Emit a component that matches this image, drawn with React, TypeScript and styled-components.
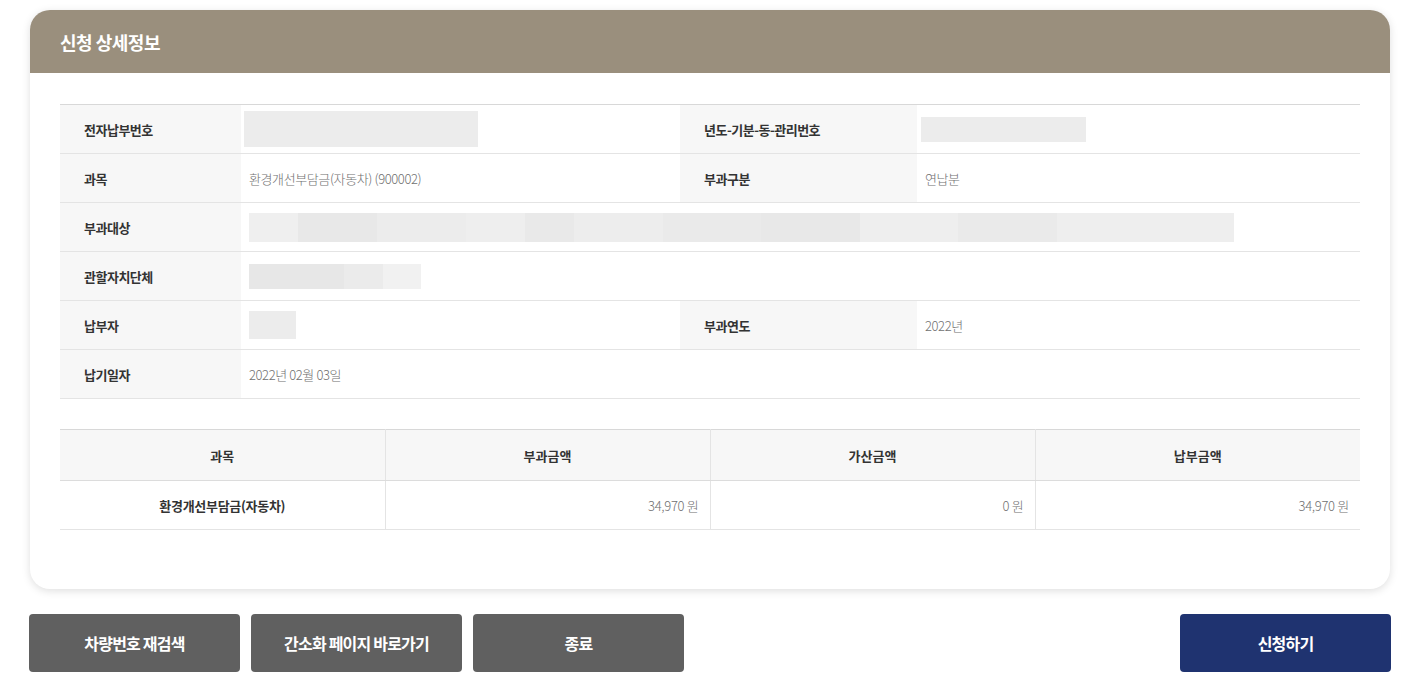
import styled, { createGlobalStyle } from "styled-components";

const GlobalStyle = createGlobalStyle`
  html, body {
    margin: 0;
    padding: 0;
    background: #ffffff;
  }
  body {
    font-family: "Noto Sans CJK KR", "Noto Sans", sans-serif;
    color: #333;
  }
`;

const Page = styled.div`
  width: 1410px;
  padding: 10px 20px 0 30px;
  box-sizing: border-box;
`;

const Card = styled.section`
  width: 1360px;
  background: #fff;
  border-radius: 20px;
  box-shadow: 0 2px 8px rgba(0, 0, 0, 0.13);
  overflow: hidden;
`;

const CardHeader = styled.h2`
  margin: 0;
  height: 63px;
  display: flex;
  align-items: center;
  padding: 0 30px;
  background: #9a8f7d;
  color: #fff;
  font-size: 18px;
  font-weight: 700;
  letter-spacing: -0.5px;
`;

const CardBody = styled.div`
  padding: 31px 30px 59px;
  display: flex;
  flex-direction: column;
  gap: 30px;
`;

const Table = styled.table`
  width: 100%;
  border-collapse: collapse;
  table-layout: fixed;
  border-top: 1px solid #d8d8d8;
  font-size: 13px;
`;

const Label = styled.th`
  height: 48px;
  padding: 0 0 0 24px;
  text-align: left;
  background: #f7f7f7;
  font-weight: 700;
  color: #333;
  border-bottom: 1px solid #e4e4e4;
  letter-spacing: -0.5px;
`;

const Value = styled.td`
  height: 48px;
  padding: 0 8px;
  color: #707070;
  font-weight: 300;
  border-bottom: 1px solid #e4e4e4;
  letter-spacing: -0.4px;
`;

const patterns = {
  plain: "#ececec",
  wide: `linear-gradient(90deg,
    #efefef 0 5%, #e8e8e8 5% 13%, #ececec 13% 22%, #eeeeee 22% 28%,
    #e9e9e9 28% 33%, #ededed 33% 42%, #eaeaea 42% 52%, #e8e8e8 52% 62%,
    #eeeeee 62% 72%, #eaeaea 72% 82%, #eeeeee 82% 100%)`,
  short: `linear-gradient(90deg,
    #e7e7e7 0 55%, #ebebeb 55% 78%, #f1f1f1 78% 100%)`,
};

const Redacted = styled.div<{ $w: number; $h: number; $pattern?: keyof typeof patterns }>`
  width: ${(p) => p.$w}px;
  height: ${(p) => p.$h}px;
  background: ${(p) => patterns[p.$pattern ?? "plain"]};
`;

const HeadCell = styled.th`
  height: 48px;
  background: #f7f7f7;
  font-weight: 700;
  color: #333;
  border-bottom: 1px solid #dcdcdc;
  border-left: 1px solid #e4e4e4;
  text-align: center;
  &:first-child {
    border-left: none;
  }
`;

const BodyCell = styled.td<{ $align?: "left" | "center" | "right"; $bold?: boolean }>`
  height: 48px;
  padding: 0 11px;
  text-align: ${(p) => p.$align ?? "right"};
  font-weight: ${(p) => (p.$bold ? 700 : 300)};
  color: ${(p) => (p.$bold ? "#333" : "#707070")};
  border-bottom: 1px solid #e4e4e4;
  border-left: 1px solid #e4e4e4;
  letter-spacing: -0.3px;
  &:first-child {
    border-left: none;
  }
`;

const Actions = styled.div`
  display: flex;
  align-items: center;
  gap: 11px;
  margin-top: 25px;
  width: 1362px;
  margin-left: -1px;
`;

const Button = styled.button<{ $primary?: boolean }>`
  width: 211px;
  height: 58px;
  border: none;
  border-radius: 4px;
  background: ${(p) => (p.$primary ? "#1f3370" : "#606060")};
  color: #fff;
  font-family: "Noto Sans CJK KR", "Noto Sans", sans-serif;
  font-size: 16px;
  font-weight: 700;
  letter-spacing: -0.8px;
  cursor: pointer;
  ${(p) => (p.$primary ? "margin-left: auto;" : "")}
`;

export default function App() {
  return (
    <>
      <GlobalStyle />
      <Page>
        <Card>
          <CardHeader>신청 상세정보</CardHeader>
          <CardBody>
            <Table>
              <colgroup>
                <col style={{ width: 181 }} />
                <col style={{ width: 439 }} />
                <col style={{ width: 237 }} />
                <col />
              </colgroup>
              <tbody>
                <tr>
                  <Label>전자납부번호</Label>
                  <Value style={{ paddingLeft: 3 }}>
                    <Redacted $w={234} $h={36} />
                  </Value>
                  <Label>년도-기분-동-관리번호</Label>
                  <Value style={{ paddingLeft: 4 }}>
                    <Redacted $w={165} $h={25} />
                  </Value>
                </tr>
                <tr>
                  <Label>과목</Label>
                  <Value>환경개선부담금(자동차) (900002)</Value>
                  <Label>부과구분</Label>
                  <Value>연납분</Value>
                </tr>
                <tr>
                  <Label>부과대상</Label>
                  <Value colSpan={3}>
                    <Redacted $w={985} $h={29} $pattern="wide" />
                  </Value>
                </tr>
                <tr>
                  <Label>관할자치단체</Label>
                  <Value colSpan={3}>
                    <Redacted $w={172} $h={25} $pattern="short" />
                  </Value>
                </tr>
                <tr>
                  <Label>납부자</Label>
                  <Value>
                    <Redacted $w={47} $h={28} />
                  </Value>
                  <Label>부과연도</Label>
                  <Value>2022년</Value>
                </tr>
                <tr>
                  <Label>납기일자</Label>
                  <Value colSpan={3}>2022년 02월 03일</Value>
                </tr>
              </tbody>
            </Table>

            <Table>
              <thead>
                <tr>
                  <HeadCell>과목</HeadCell>
                  <HeadCell>부과금액</HeadCell>
                  <HeadCell>가산금액</HeadCell>
                  <HeadCell>납부금액</HeadCell>
                </tr>
              </thead>
              <tbody>
                <tr>
                  <BodyCell $align="center" $bold>
                    환경개선부담금(자동차)
                  </BodyCell>
                  <BodyCell>34,970 원</BodyCell>
                  <BodyCell>0 원</BodyCell>
                  <BodyCell>34,970 원</BodyCell>
                </tr>
              </tbody>
            </Table>
          </CardBody>
        </Card>

        <Actions>
          <Button>차량번호 재검색</Button>
          <Button>간소화 페이지 바로가기</Button>
          <Button>종료</Button>
          <Button $primary>신청하기</Button>
        </Actions>
      </Page>
    </>
  );
}
